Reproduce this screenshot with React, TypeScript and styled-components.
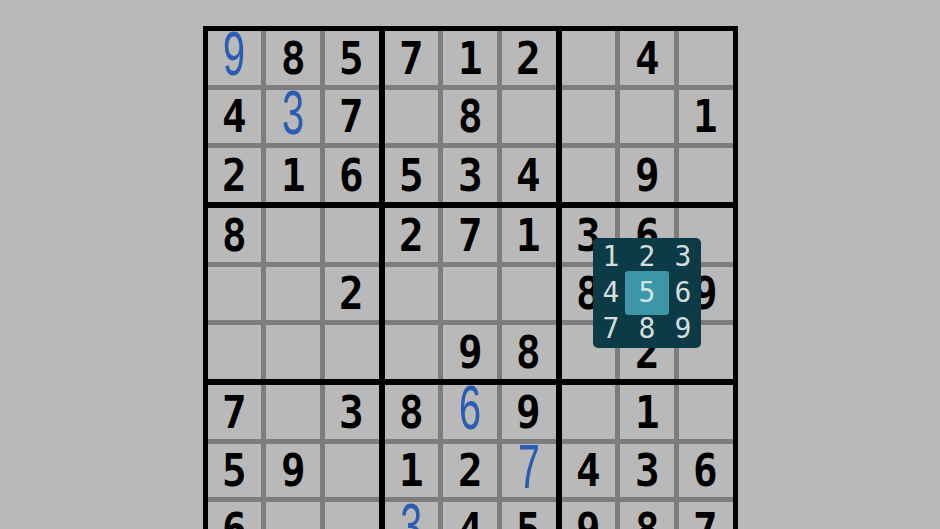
import React from 'react';
import styled, { createGlobalStyle } from 'styled-components';

const GlobalStyle = createGlobalStyle`
  html, body {
    margin: 0;
    padding: 0;
    height: 100%;
    overflow: hidden;
    background: #b9b9b9;
  }
`;

// 81 cells, row by row; "." is empty
const PUZZLE = [
  '985712.4.',
  '437.8...1',
  '216534.9.',
  '8..27136.',
  '..2...8.9',
  '....98.2.',
  '7.3869.1.',
  '59.127436',
  '6..345987',
];

// cells the player filled in (drawn in blue)
const ENTERED = new Set(['0-0', '1-1', '6-4', '7-5', '8-3']);

const PICKER_CELL = '4-7';
const PICKER_ACTIVE = 5;

const Page = styled.div`
  height: 529px;
  display: flex;
  justify-content: center;
  align-items: flex-start;
  padding-top: 26px;
  box-sizing: border-box;
  overflow: hidden;
`;

const Board = styled.div`
  flex-shrink: 0;
  display: grid;
  grid-template-columns: repeat(3, 171px);
  grid-template-rows: repeat(3, 171px);
  gap: 6px;
  padding: 5px;
  background: #000;
`;

const Box = styled.div`
  display: grid;
  grid-template-columns: repeat(3, 1fr);
  grid-template-rows: repeat(3, 1fr);
  gap: 5px;
  background: #7d7d7d;
`;

const Cell = styled.div`
  position: relative;
  display: flex;
  align-items: center;
  justify-content: center;
  background: #b9b9b9;
`;

const Digit = styled.span<{ $entered: boolean }>`
  display: block;
  line-height: 1;
  font-family: ${p => (p.$entered ? '"Liberation Mono"' : '"DejaVu Sans Mono"')}, monospace;
  font-weight: ${p => (p.$entered ? 400 : 700)};
  font-size: ${p => (p.$entered ? '50px' : '44px')};
  color: ${p => (p.$entered ? '#2a5cb4' : '#000')};
  transform: ${p => (p.$entered ? 'scale(0.8, 1.3)' : 'scaleX(0.93)')};
  margin-top: ${p => (p.$entered ? '1px' : '2px')};
`;

const Picker = styled.div`
  position: absolute;
  left: 50%;
  top: 50%;
  z-index: 2;
  width: 108px;
  height: 110px;
  transform: translate(-50%, -50%);
  background: #0c3a47;
  border-radius: 5px;
  display: grid;
  grid-template-columns: repeat(3, 36px);
  grid-template-rows: repeat(3, 36px);
  place-content: center;
`;

const Option = styled.div<{ $active: boolean }>`
  display: flex;
  align-items: center;
  justify-content: center;
  font-family: "DejaVu Sans Mono", monospace;
  font-size: 28px;
  line-height: 1;
  color: ${p => (p.$active ? '#cfe3e6' : '#d5dcdc')};
  background: ${p => (p.$active ? '#3b96a5' : 'transparent')};
  border-radius: 1px;
  box-shadow: ${p => (p.$active ? '0 0 0 4px #3b96a5' : 'none')};
`;

const NumberPicker: React.FC<{ active: number }> = ({ active }) => (
  <Picker>
    {[1, 2, 3, 4, 5, 6, 7, 8, 9].map(n => (
      <Option key={n} $active={n === active}>{n}</Option>
    ))}
  </Picker>
);

export default function App() {
  return (
    <>
      <GlobalStyle />
      <Page>
        <Board>
          {Array.from({ length: 9 }, (_, b) => (
            <Box key={b}>
              {Array.from({ length: 9 }, (_, c) => {
                const row = Math.floor(b / 3) * 3 + Math.floor(c / 3);
                const col = (b % 3) * 3 + (c % 3);
                const key = `${row}-${col}`;
                const value = PUZZLE[row][col];
                return (
                  <Cell key={key}>
                    {value !== '.' && (
                      <Digit $entered={ENTERED.has(key)}>{value}</Digit>
                    )}
                    {key === PICKER_CELL && <NumberPicker active={PICKER_ACTIVE} />}
                  </Cell>
                );
              })}
            </Box>
          ))}
        </Board>
      </Page>
    </>
  );
}
